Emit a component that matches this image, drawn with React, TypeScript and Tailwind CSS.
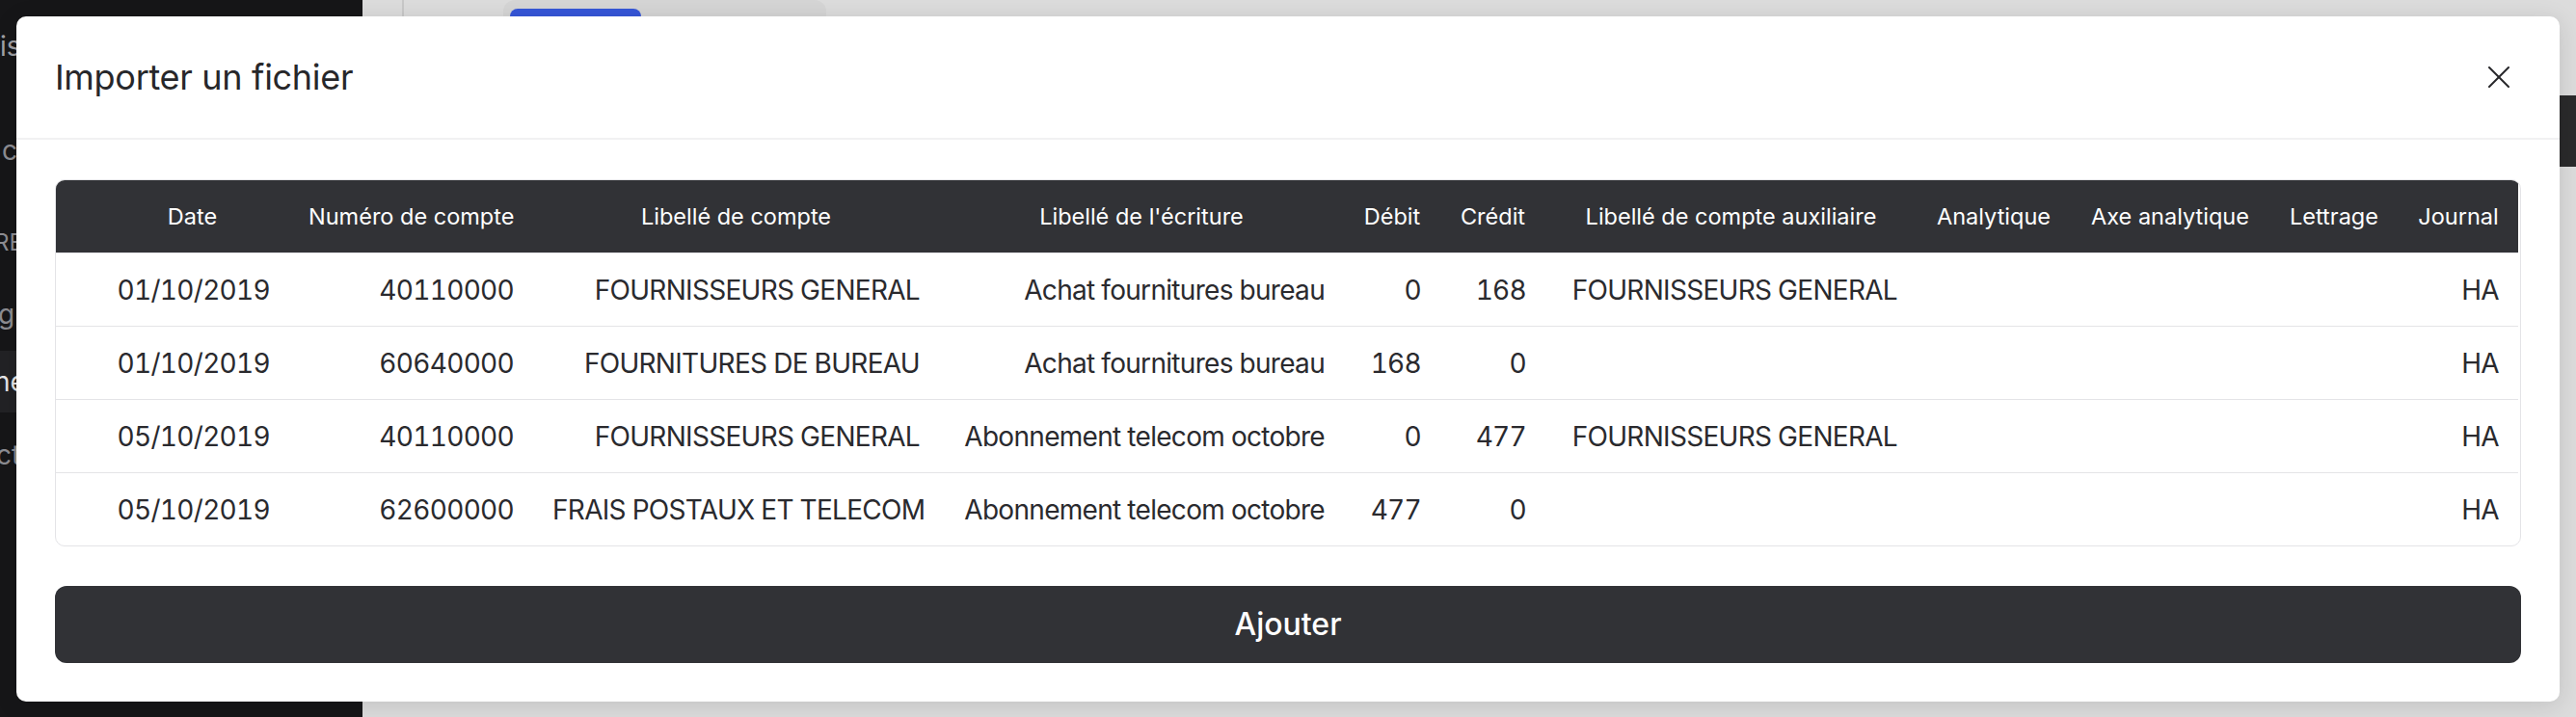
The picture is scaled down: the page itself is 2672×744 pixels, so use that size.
import React from "react";

const cols = [
  { label: "Date", w: 243 },
  { label: "Numéro de compte", w: 253 },
  { label: "Libellé de compte", w: 421 },
  { label: "Libellé de l'écriture", w: 420 },
  { label: "Débit", w: 100 },
  { label: "Crédit", w: 109 },
  { label: "Libellé de compte auxiliaire", w: 385 },
  { label: "Analytique", w: 160 },
  { label: "Axe analytique", w: 206 },
  { label: "Lettrage", w: 134 },
  { label: "Journal", w: 125 },
];

const rows: string[][] = [
  ["01/10/2019", "40110000", "FOURNISSEURS GENERAL", "Achat fournitures bureau", "0", "168", "FOURNISSEURS GENERAL", "", "", "", "HA"],
  ["01/10/2019", "60640000", "FOURNITURES DE BUREAU", "Achat fournitures bureau", "168", "0", "", "", "", "", "HA"],
  ["05/10/2019", "40110000", "FOURNISSEURS GENERAL", "Abonnement telecom octobre", "0", "477", "FOURNISSEURS GENERAL", "", "", "", "HA"],
  ["05/10/2019", "62600000", "FRAIS POSTAUX ET TELECOM", "Abonnement telecom octobre", "477", "0", "", "", "", "", "HA"],
];

export default function App() {
  return (
    <div
      className="relative w-[2672px] h-[744px] overflow-hidden flex"
      style={{ fontFamily: "Inter, 'Noto Sans', 'Liberation Sans', sans-serif" }}
    >
      {/* Sidebar behind */}
      <div className="w-[376px] h-full bg-[#161618] flex flex-col text-[28px] text-[#8d8d92]">
        <div className="h-[20px]" />
        <div className="h-[56px] flex items-center pl-[0px] text-[#a1a1a6]">is</div>
        <div className="h-[52px]" />
        <div className="h-[56px] flex items-center pl-[2px]">c</div>
        <div className="h-[40px]" />
        <div className="h-[56px] flex items-center text-[24px] -ml-[6px]">RE</div>
        <div className="h-[18px]" />
        <div className="h-[56px] flex items-center -ml-[2px]">g</div>
        <div className="h-[10px]" />
        <div className="h-[64px] flex items-center bg-[#222225] text-[#e6e6e8] -ml-[6px] pl-[0px]">né</div>
        <div className="h-[16px]" />
        <div className="h-[56px] flex items-center -ml-[4px]">ct</div>
      </div>

      {/* Main behind */}
      <div className="flex-1 h-full bg-[#dcdcdc] flex">
        <div className="w-[41px] h-full" />
        <div className="w-[2px] h-[17px] bg-[#c8c8c8]" />
        <div className="ml-[103px] w-[335px] h-[40px] bg-[#d5d5d5] rounded-[12px] pl-[7px] pt-[9px]">
          <div className="w-[136px] h-[30px] bg-[#3656d8] rounded-[8px]" />
        </div>
        <div className="flex-1" />
        <div className="w-[17px] h-full flex flex-col">
          <div className="h-[99px]" />
          <div className="h-[74px] bg-[#2a2a2b]" />
        </div>
      </div>

      {/* Modal */}
      <div className="absolute left-[17px] top-[17px] w-[2638px] h-[711px] bg-white rounded-[10px] flex flex-col shadow-[0_4px_24px_rgba(0,0,0,0.12)]">
        <div className="h-[128px] flex items-center justify-between pl-[40px] pr-[52px] border-b-2 border-[#f1f1f2]">
          <h2 className="text-[36px] text-[#27272a] font-normal tracking-[-0.3px]">Importer un fichier</h2>
          <svg width="22" height="22" viewBox="0 0 22 22" fill="none" stroke="#27272a" strokeWidth="2" strokeLinecap="round">
            <line x1="1" y1="1" x2="21" y2="21" />
            <line x1="21" y1="1" x2="1" y2="21" />
          </svg>
        </div>
        <div className="flex-1 flex flex-col px-[40px] pt-[41px] pb-[40px] gap-[41px]">
          <div className="border border-[#e4e4e7] rounded-[10px] overflow-hidden">
            <table className="table-fixed border-separate border-spacing-0 w-[2554px]">
              <colgroup>
                {cols.map((c, i) => (
                  <col key={i} style={{ width: i === 0 ? c.w - 1 : i === cols.length - 1 ? c.w - 1 : c.w }} />
                ))}
              </colgroup>
              <thead>
                <tr className="h-[75px]">
                  {cols.map((c, i) => (
                    <th
                      key={i}
                      className={
                        "bg-[#313236] text-white text-[23.5px] font-normal text-center pr-[20px] whitespace-nowrap " +
                        (i === 0 ? "pl-[61px]" : "pl-[20px]")
                      }
                    >
                      {c.label}
                    </th>
                  ))}
                </tr>
              </thead>
              <tbody>
                {rows.map((r, ri) => (
                  <tr key={ri} className="h-[76px]">
                    {r.map((v, ci) => (
                      <td
                        key={ci}
                        className={
                          "border-t border-[#e4e4e7] text-right pr-[20px] text-[28px] text-[#2a2a2e] whitespace-nowrap tabular-nums tracking-[-0.7px] " +
                          (ci === 0 ? "pl-[61px]" : "pl-[20px]")
                        }
                      >
                        {v}
                      </td>
                    ))}
                  </tr>
                ))}
              </tbody>
            </table>
          </div>
          <button className="h-[80px] w-full bg-[#313236] rounded-[12px] text-white text-[32px] font-medium">
            Ajouter
          </button>
        </div>
      </div>
    </div>
  );
}
